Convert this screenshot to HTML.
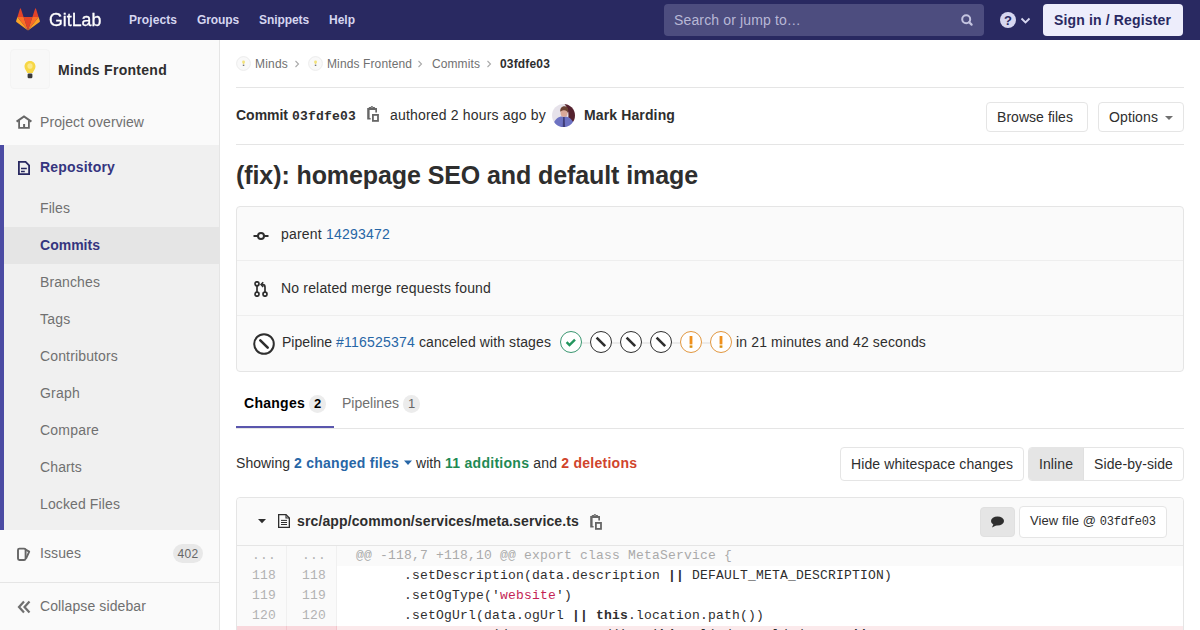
<!DOCTYPE html>
<html><head><meta charset="utf-8">
<style>
*{box-sizing:border-box;margin:0;padding:0}
html,body{width:1200px;height:630px;overflow:hidden;background:#fff;font-family:"Liberation Sans",sans-serif;font-size:14px;color:#2e2e2e}
.abs{position:absolute;white-space:nowrap}
.mono{font-family:"Liberation Mono",monospace}
.hr{position:absolute;height:1px;background:#e5e5e5}
.btn{position:absolute;border:1px solid #e5e5e5;border-radius:4px;background:#fff}
.conn{position:absolute;top:342px;width:8px;height:2px;background:#ebebeb}
.ln{position:absolute;height:20px;line-height:20px;font-family:"Liberation Mono",monospace;font-size:13px;letter-spacing:0.2px;color:#b3b3b3;text-align:right}
.code{position:absolute;left:337px;height:20px;line-height:20px;font-family:"Liberation Mono",monospace;font-size:13px;letter-spacing:0.2px;color:#2e2e2e;white-space:pre;padding-left:19px}
b{font-weight:bold}
</style></head><body>
<div class="abs" style="left:0;top:0;width:1200px;height:40px;background:#292961"></div>
<svg class="abs" style="left:16px;top:8px" width="24" height="23" viewBox="0 0 24 23">
<path d="M12 22.5 L16.4 8.9 H7.6 Z" fill="#e24329"/>
<path d="M12 22.5 L7.6 8.9 H1.4 Z" fill="#fc6d26"/>
<path d="M1.4 8.9 L0.1 13 a0.9 0.9 0 0 0 .3 1 L12 22.5 Z" fill="#fca326"/>
<path d="M1.4 8.9 H7.6 L4.9 0.7 a0.47 0.47 0 0 0 -.9 0 Z" fill="#e24329"/>
<path d="M12 22.5 L16.4 8.9 H22.6 Z" fill="#fc6d26"/>
<path d="M22.6 8.9 L23.9 13 a0.9 0.9 0 0 1 -.3 1 L12 22.5 Z" fill="#fca326"/>
<path d="M22.6 8.9 H16.4 L19.1 0.7 a0.47 0.47 0 0 1 .9 0 Z" fill="#e24329"/>
</svg>
<div class="abs" style="left:49px;top:0;line-height:40px;color:#fff;font-size:19px;letter-spacing:0px;transform:scaleX(0.935);transform-origin:0 0;-webkit-text-stroke:0.3px #fff">GitLab</div>
<div class="abs" style="left:129px;top:-1px;line-height:40px;color:#d6d6f0"><span style="font-weight:bold;font-size:12px;letter-spacing:0.081px;">Projects</span></div>
<div class="abs" style="left:197px;top:-1px;line-height:40px;color:#d6d6f0"><span style="font-weight:bold;font-size:12px;letter-spacing:-0.111px;">Groups</span></div>
<div class="abs" style="left:259px;top:-1px;line-height:40px;color:#d6d6f0"><span style="font-weight:bold;font-size:12px;letter-spacing:-0.084px;">Snippets</span></div>
<div class="abs" style="left:329px;top:-1px;line-height:40px;color:#d6d6f0"><span style="font-weight:bold;font-size:12px;letter-spacing:-0.001px;">Help</span></div>
<div class="abs" style="left:664px;top:4px;width:320px;height:32px;border-radius:4px;background:#4d4d7f"></div>
<div class="abs" style="left:674px;top:4px;line-height:32px;color:#b8b8d6"><span style="font-size:14px;letter-spacing:0.139px;">Search or jump to…</span></div>
<svg class="abs" style="left:960px;top:13px" width="14" height="14" viewBox="0 0 14 14"><circle cx="6.2" cy="6.2" r="4" fill="none" stroke="#c4c4e0" stroke-width="2"/><path d="M9.2 9.2 L11.6 11.6" stroke="#c4c4e0" stroke-width="2.2" stroke-linecap="round"/></svg>
<svg class="abs" style="left:1000px;top:12px" width="16" height="16" viewBox="0 0 16 16"><circle cx="8" cy="8" r="8" fill="#d6d6f0"/><text x="8" y="12.6" text-anchor="middle" font-family="Liberation Sans" font-weight="bold" font-size="13" fill="#292961">?</text></svg>
<svg class="abs" style="left:1020px;top:17px" width="11" height="8" viewBox="0 0 11 8"><path d="M1.5 1.5 L5.5 5.5 L9.5 1.5" fill="none" stroke="#d6d6f0" stroke-width="1.8"/></svg>
<div class="abs" style="left:1043px;top:4px;width:140px;height:32px;border-radius:4px;background:#ededfb"></div>
<div class="abs" style="left:1054px;top:4px;line-height:32px;color:#292961"><span style="font-weight:bold;font-size:14px;letter-spacing:0.147px;">Sign in / Register</span></div>
<div class="abs" style="left:0;top:40px;width:220px;height:590px;background:#fafafa;border-right:1px solid #e5e5e5"></div>
<div class="abs" style="left:10px;top:49px;width:40px;height:40px;border-radius:4px;background:#f8f8f8;border:1px solid #f4f4f4"></div>
<svg class="abs" style="left:22px;top:59px" width="16" height="22" viewBox="0 0 16 22"><defs><filter id="bl" x="-30%" y="-30%" width="160%" height="160%"><feGaussianBlur stdDeviation="0.6"/></filter></defs><g filter="url(#bl)"><path d="M8 2 C4.5 2 2.5 4.6 2.5 7.5 C2.5 10 4.3 11.5 5.3 14 L10.7 14 C11.7 11.5 13.5 10 13.5 7.5 C13.5 4.6 11.5 2 8 2Z" fill="#f7d745"/><ellipse cx="8" cy="7" rx="2.6" ry="2.8" fill="#fbe88a"/><rect x="5.6" y="14.6" width="4.8" height="4.6" rx="1.2" fill="#3a3a3a"/></g></svg>
<div class="abs" style="left:58px;top:60px;line-height:20px"><span style="font-weight:bold;font-size:14px;letter-spacing:0.287px;">Minds Frontend</span></div>
<svg class="abs" style="left:16px;top:115px" width="16" height="15" viewBox="0 0 16 15"><path d="M3.1 5.2 V12.85 H12.9 V5.2" fill="none" stroke="#666" stroke-width="1.8"/><path d="M0.6 6.6 L8 1.4 L15.4 6.6" fill="none" stroke="#666" stroke-width="2"/><rect x="7.1" y="9" width="2" height="4" fill="#666"/></svg>
<div class="abs" style="left:40px;top:112px;line-height:20px;height:20px;font-size:14px;color:#707070"><span style="font-size:14px;letter-spacing:0.081px;">Project overview</span></div>
<div class="abs" style="left:0;top:145px;width:219px;height:385px;background:#f0f0f0"></div>
<div class="abs" style="left:0;top:145px;width:4px;height:385px;background:#4b4ba3"></div>
<svg class="abs" style="left:18px;top:161px" width="12" height="14" viewBox="0 0 12 14"><path d="M0.9 0.9 H7.6 L11.1 4.4 V13.1 H0.9 Z" fill="none" stroke="#292961" stroke-width="1.8" stroke-linejoin="miter"/><path d="M3 7.4 H8.8 M3 10.4 H6.8" stroke="#292961" stroke-width="1.5"/></svg>
<div class="abs" style="left:40px;top:157px;line-height:20px;height:20px;font-size:14px;color:#35357f"><span style="font-weight:bold;font-size:14px;letter-spacing:0.188px;">Repository</span></div>
<div class="abs" style="left:4px;top:227px;width:215px;height:37px;background:#e5e5e5"></div>
<div class="abs" style="left:40px;top:198px;line-height:20px;height:20px;font-size:14px;color:#707070"><span style="font-size:14px;letter-spacing:0.088px;">Files</span></div>
<div class="abs" style="left:40px;top:235px;line-height:20px;height:20px;font-size:14px;color:#35357f"><span style="font-weight:bold;font-size:14px;letter-spacing:0.015px;">Commits</span></div>
<div class="abs" style="left:40px;top:272px;line-height:20px;height:20px;font-size:14px;color:#707070"><span style="font-size:14px;letter-spacing:0.107px;">Branches</span></div>
<div class="abs" style="left:40px;top:309px;line-height:20px;height:20px;font-size:14px;color:#707070"><span style="font-size:14px;letter-spacing:0.219px;">Tags</span></div>
<div class="abs" style="left:40px;top:346px;line-height:20px;height:20px;font-size:14px;color:#707070"><span style="font-size:14px;letter-spacing:0.145px;">Contributors</span></div>
<div class="abs" style="left:40px;top:383px;line-height:20px;height:20px;font-size:14px;color:#707070"><span style="font-size:14px;letter-spacing:0.218px;">Graph</span></div>
<div class="abs" style="left:40px;top:420px;line-height:20px;height:20px;font-size:14px;color:#707070"><span style="font-size:14px;letter-spacing:0.203px;">Compare</span></div>
<div class="abs" style="left:40px;top:457px;line-height:20px;height:20px;font-size:14px;color:#707070"><span style="font-size:14px;letter-spacing:0.128px;">Charts</span></div>
<div class="abs" style="left:40px;top:494px;line-height:20px;height:20px;font-size:14px;color:#707070"><span style="font-size:14px;letter-spacing:0.117px;">Locked Files</span></div>
<svg class="abs" style="left:16px;top:546px" width="16" height="16" viewBox="0 0 16 16"><rect x="2" y="2.6" width="7.6" height="11.4" rx="1.4" fill="none" stroke="#666" stroke-width="1.9"/><path d="M9.6 3.6 L13.2 5.6 L10 12.6" fill="none" stroke="#666" stroke-width="1.9" stroke-linejoin="round"/></svg>
<div class="abs" style="left:40px;top:543px;line-height:20px;height:20px;font-size:14px;color:#707070"><span style="font-size:14px;letter-spacing:0.090px;">Issues</span></div>
<div class="abs" style="left:173px;top:544px;width:30px;height:19px;border-radius:10px;background:#e8e8e8;color:#666;line-height:19px;text-align:center"><span style="font-size:12px;letter-spacing:0.326px;">402</span></div>
<div class="hr" style="left:0;top:582px;width:219px"></div>
<svg class="abs" style="left:17px;top:600px" width="14" height="14" viewBox="0 0 14 14"><path d="M7 1.5 L2 7 L7 12.5 M12.5 1.5 L7.5 7 L12.5 12.5" fill="none" stroke="#707070" stroke-width="2.2"/></svg>
<div class="abs" style="left:40px;top:596px;line-height:20px;height:20px;font-size:14px;color:#707070"><span style="font-size:14px;letter-spacing:0.107px;">Collapse sidebar</span></div>
<svg class="abs" style="left:236px;top:56px" width="15" height="15" viewBox="0 0 15 15"><circle cx="7.5" cy="7.5" r="6.9" fill="#f9f9f9" stroke="#ececec" stroke-width="1"/><path d="M6.1 6 a1.45 1.45 0 1 1 2.9 0 c0 0.9-0.8 1.2-0.8 2.1 h-1.3 c0-0.9-0.8-1.2-0.8-2.1z" fill="#f2e27c"/><rect x="6.8" y="8.6" width="1.5" height="1.4" fill="#777"/></svg>
<div class="abs" style="left:255px;top:54px;line-height:20px;height:20px;font-size:12px;color:#707070"><span style="font-size:12px;letter-spacing:0.198px;">Minds</span></div>
<svg class="abs" style="left:294px;top:60px" width="6" height="8" viewBox="0 0 6 8"><path d="M1.5 1 L4.5 4 L1.5 7" fill="none" stroke="#aaa" stroke-width="1.1"/></svg>
<svg class="abs" style="left:308px;top:56px" width="15" height="15" viewBox="0 0 15 15"><circle cx="7.5" cy="7.5" r="6.9" fill="#f9f9f9" stroke="#ececec" stroke-width="1"/><path d="M6.1 6 a1.45 1.45 0 1 1 2.9 0 c0 0.9-0.8 1.2-0.8 2.1 h-1.3 c0-0.9-0.8-1.2-0.8-2.1z" fill="#f2e27c"/><rect x="6.8" y="8.6" width="1.5" height="1.4" fill="#777"/></svg>
<div class="abs" style="left:327px;top:54px;line-height:20px;height:20px;font-size:12px;color:#707070"><span style="font-size:12px;letter-spacing:0.116px;">Minds Frontend</span></div>
<svg class="abs" style="left:417px;top:60px" width="6" height="8" viewBox="0 0 6 8"><path d="M1.5 1 L4.5 4 L1.5 7" fill="none" stroke="#aaa" stroke-width="1.1"/></svg>
<div class="abs" style="left:432px;top:54px;line-height:20px;height:20px;font-size:12px;color:#707070"><span style="font-size:12px;letter-spacing:0.095px;">Commits</span></div>
<svg class="abs" style="left:486px;top:60px" width="6" height="8" viewBox="0 0 6 8"><path d="M1.5 1 L4.5 4 L1.5 7" fill="none" stroke="#aaa" stroke-width="1.1"/></svg>
<div class="abs" style="left:500px;top:54px;line-height:20px;height:20px;font-size:12px;color:#2e2e2e"><span style="font-weight:bold;font-size:12px;letter-spacing:0.164px;">03fdfe03</span></div>
<div class="hr" style="left:236px;top:87px;width:948px"></div>
<div class="abs" style="left:236px;top:105px;line-height:20px;height:20px;font-size:14px;"><span style="font-weight:bold;font-size:14px;letter-spacing:-0.018px;">Commit</span></div>
<div class="abs" style="left:292px;top:107px;line-height:20px;height:20px;font-size:13px;font-family:Liberation Mono;font-weight:bold;letter-spacing:0.2px">03fdfe03</div>
<svg class="abs" style="left:366px;top:105px" width="14" height="18" viewBox="0 0 14 18"><path d="M2.7 4.6 V2.6 Q2.7 1.9 3.6 1.9 H4.6 Q5.2 0.9 5.9 0.9 Q6.6 0.9 7.2 1.9 H8.2 Q9.1 1.9 9.1 2.6 V4.6 Z" fill="#666"/><rect x="5.1" y="2.7" width="1.7" height="1.3" fill="#fff"/><path d="M1.2 3 H11 V7.4 H9.3 V4.9 H3.6 V13 H4.6 V14.6 H1.2 Z" fill="#666"/><rect x="6.9" y="9.9" width="5.1" height="6" fill="none" stroke="#666" stroke-width="1.8"/></svg>
<div class="abs" style="left:390px;top:105px;line-height:20px;height:20px;font-size:14px;"><span style="font-size:14px;letter-spacing:0.184px;">authored 2 hours ago by</span></div>
<svg class="abs" style="left:552px;top:104px" width="23" height="23" viewBox="0 0 24 24"><defs><clipPath id="av"><circle cx="12" cy="12" r="12"/></clipPath><filter id="avb" x="-10%" y="-10%" width="120%" height="120%"><feGaussianBlur stdDeviation="0.5"/></filter></defs><g clip-path="url(#av)"><g filter="url(#avb)"><rect width="24" height="24" fill="#e6e2ea"/><path d="M13 0 H24 V24 H14 C18 16 19 7 13 0 Z" fill="#55202e"/><path d="M1 22 C3 15 8 12.5 12 13.2 C16 12.5 21 15 23 21 V24 H1 Z" fill="#6d72c2"/><path d="M11.6 13.5 H13.2 L13.6 24 H11.2 Z" fill="#3f3d78"/><ellipse cx="12.6" cy="9" rx="3.7" ry="4.4" fill="#d9a898"/><path d="M8.6 8.2 C8.2 3.8 11 2.2 13.5 2.4 C16.5 2.6 17.8 5.5 16.4 9.5 C15.8 6.5 12.5 5.5 8.6 8.2 Z" fill="#6b4232"/></g></g></svg>
<div class="abs" style="left:584px;top:105px;line-height:20px;height:20px;font-size:14px;"><span style="font-weight:bold;font-size:14px;letter-spacing:0.128px;">Mark Harding</span></div>
<div class="btn" style="left:986px;top:102px;width:102px;height:30px"></div>
<div class="abs" style="left:997px;top:107px;line-height:20px;height:20px;font-size:14px;"><span style="font-size:14px;letter-spacing:0.044px;">Browse files</span></div>
<div class="btn" style="left:1098px;top:102px;width:86px;height:30px"></div>
<div class="abs" style="left:1109px;top:107px;line-height:20px;height:20px;font-size:14px;"><span style="font-size:14px;letter-spacing:0.107px;">Options</span></div>
<svg class="abs" style="left:1164px;top:115px" width="10" height="6" viewBox="0 0 10 6"><path d="M1 1 L5 5 L9 1Z" fill="#707070"/></svg>
<div class="hr" style="left:236px;top:144px;width:948px"></div>
<div class="abs" style="left:236px;top:159px;line-height:32px;color:#2e2e2e"><span style="font-weight:bold;font-size:25px;letter-spacing:-0.090px;">(fix): homepage SEO and default image</span></div>
<div class="abs" style="left:236px;top:206px;width:948px;height:166px;background:#fafafa;border:1px solid #e5e5e5;border-radius:4px"></div>
<div class="hr" style="left:237px;top:260px;width:946px;background:#eeeeee"></div>
<div class="hr" style="left:237px;top:315px;width:946px;background:#eeeeee"></div>
<svg class="abs" style="left:253px;top:228px" width="16" height="16" viewBox="0 0 16 16"><circle cx="8" cy="8" r="3" fill="none" stroke="#2e2e2e" stroke-width="2"/><path d="M0.5 8 H5 M11 8 H15.5" stroke="#2e2e2e" stroke-width="2"/></svg>
<div class="abs" style="left:281px;top:224px;line-height:20px;height:20px;font-size:14px;"><span style="font-size:14px;letter-spacing:0.202px;">parent </span><span style="font-size:14px;letter-spacing:0.214px;color:#2766a6">14293472</span></div>
<svg class="abs" style="left:253px;top:281px" width="16" height="16" viewBox="0 0 16 16"><circle cx="4" cy="13.2" r="2" fill="none" stroke="#2e2e2e" stroke-width="1.7"/><circle cx="12" cy="13.2" r="2" fill="none" stroke="#2e2e2e" stroke-width="1.7"/><circle cx="4" cy="2.8" r="2" fill="none" stroke="#2e2e2e" stroke-width="1.7"/><path d="M4 4.8 V11.2 M12 11.2 V6.2 C12 4.5 11.2 3.6 9.8 3.6 H9" fill="none" stroke="#2e2e2e" stroke-width="1.7"/><path d="M10.2 1.2 L8 3.6 L10.2 6" fill="none" stroke="#2e2e2e" stroke-width="1.5"/></svg>
<div class="abs" style="left:281px;top:278px;line-height:20px;height:20px;font-size:14px;"><span style="font-size:14px;letter-spacing:0.172px;">No related merge requests found</span></div>
<svg class="abs" style="left:253px;top:333px" width="22" height="22" viewBox="0 0 22 22"><circle cx="11" cy="11" r="9.8" fill="#fff" stroke="#2e2e2e" stroke-width="2"/><path d="M7.3 7.3 L14.7 14.7" stroke="#2e2e2e" stroke-width="2.6" stroke-linecap="round"/></svg>
<div class="abs" style="left:282px;top:332px;line-height:20px;height:20px;font-size:14px;"><span style="font-size:14px;letter-spacing:0.033px;">Pipeline </span><span style="font-size:14px;letter-spacing:0.214px;color:#2766a6">#116525374</span><span style="font-size:14px;letter-spacing:0.102px;"> canceled with stages</span></div>
<div class="conn" style="left:582px"></div>
<div class="conn" style="left:612px"></div>
<div class="conn" style="left:642px"></div>
<div class="conn" style="left:672px"></div>
<div class="conn" style="left:702px"></div>
<svg class="abs" style="left:560px;top:331px" width="22" height="22" viewBox="0 0 22 22"><circle cx="11" cy="11" r="10.5" fill="#fff" stroke="#3a9670" stroke-width="1"/><path d="M6.6 11.2 L9.5 14.1 L15 8.6" fill="none" stroke="#23965e" stroke-width="2.4" stroke-linecap="butt" stroke-linejoin="miter"/></svg>
<svg class="abs" style="left:590px;top:331px" width="22" height="22" viewBox="0 0 22 22"><circle cx="11" cy="11" r="10.5" fill="#fff" stroke="#2e2e2e" stroke-width="1"/><path d="M6.6 6.6 L15.2 15.2" stroke="#2e2e2e" stroke-width="2.6" stroke-linecap="butt"/></svg>
<svg class="abs" style="left:620px;top:331px" width="22" height="22" viewBox="0 0 22 22"><circle cx="11" cy="11" r="10.5" fill="#fff" stroke="#2e2e2e" stroke-width="1"/><path d="M6.6 6.6 L15.2 15.2" stroke="#2e2e2e" stroke-width="2.6" stroke-linecap="butt"/></svg>
<svg class="abs" style="left:650px;top:331px" width="22" height="22" viewBox="0 0 22 22"><circle cx="11" cy="11" r="10.5" fill="#fff" stroke="#2e2e2e" stroke-width="1"/><path d="M6.6 6.6 L15.2 15.2" stroke="#2e2e2e" stroke-width="2.6" stroke-linecap="butt"/></svg>
<svg class="abs" style="left:680px;top:331px" width="22" height="22" viewBox="0 0 22 22"><circle cx="11" cy="11" r="10.5" fill="#fff" stroke="#e0963e" stroke-width="1"/><rect x="9.6" y="5" width="2.8" height="8.4" fill="#f0901c"/><rect x="9.6" y="14.4" width="2.8" height="2.4" fill="#d9900f"/></svg>
<svg class="abs" style="left:710px;top:331px" width="22" height="22" viewBox="0 0 22 22"><circle cx="11" cy="11" r="10.5" fill="#fff" stroke="#e0963e" stroke-width="1"/><rect x="9.6" y="5" width="2.8" height="8.4" fill="#f0901c"/><rect x="9.6" y="14.4" width="2.8" height="2.4" fill="#d9900f"/></svg>
<div class="abs" style="left:736px;top:332px;line-height:20px;height:20px;font-size:14px;"><span style="font-size:14px;letter-spacing:0.142px;">in 21 minutes and 42 seconds</span></div>
<div class="hr" style="left:236px;top:428px;width:948px"></div>
<div class="abs" style="left:236px;top:426px;width:98px;height:2px;background:#5a56ad"></div>
<div class="abs" style="left:244px;top:393px;line-height:20px;height:20px;font-size:14px;color:#000"><span style="font-weight:bold;font-size:14px;letter-spacing:0.268px;">Changes</span></div>
<div class="abs" style="left:309px;top:395px;width:17px;height:18px;border-radius:9px;background:#ececec;line-height:18px;text-align:center;color:#000;font-size:13px;font-weight:bold">2</div>
<div class="abs" style="left:342px;top:393px;line-height:20px;height:20px;font-size:14px;color:#707070"><span style="font-size:14px;letter-spacing:0.021px;">Pipelines</span></div>
<div class="abs" style="left:403px;top:395px;width:17px;height:18px;border-radius:9px;background:#ececec;line-height:18px;text-align:center;color:#666;font-size:13px">1</div>
<div class="abs" style="left:236px;top:453px;line-height:20px;height:20px;font-size:14px;"><span style="font-size:14px;letter-spacing:0.051px;">Showing </span><span style="font-weight:bold;font-size:14px;letter-spacing:0.257px;color:#2766a6">2 changed files</span></div>
<svg class="abs" style="left:403px;top:460px" width="10" height="6" viewBox="0 0 10 6"><path d="M1 0.5 L5 5 L9 0.5Z" fill="#2766a6"/></svg>
<div class="abs" style="left:416px;top:453px;line-height:20px;height:20px;font-size:14px;"><span style="font-size:14px;letter-spacing:0.043px;">with </span><span style="font-weight:bold;font-size:14px;letter-spacing:0.276px;color:#1f8a54">11 additions</span><span style="font-size:14px;letter-spacing:0.172px;"> and </span><span style="font-weight:bold;font-size:14px;letter-spacing:0.261px;color:#d0442c">2 deletions</span></div>
<div class="btn" style="left:840px;top:447px;width:184px;height:34px"></div>
<div class="abs" style="left:851px;top:454px;line-height:20px;height:20px;font-size:14px;"><span style="font-size:14px;letter-spacing:0.107px;">Hide whitespace changes</span></div>
<div class="btn" style="left:1028px;top:447px;width:156px;height:34px;overflow:hidden"><div class="abs" style="left:0;top:0;width:55px;height:32px;background:#e5e5e5;border-right:1px solid #e0e0e0"></div></div>
<div class="abs" style="left:1039px;top:454px;line-height:20px;height:20px;font-size:14px;"><span style="font-size:14px;letter-spacing:0.089px;">Inline</span></div>
<div class="abs" style="left:1094px;top:454px;line-height:20px;height:20px;font-size:14px;"><span style="font-size:14px;letter-spacing:0.099px;">Side-by-side</span></div>
<div class="abs" style="left:236px;top:497px;width:948px;height:140px;border:1px solid #e5e5e5;border-radius:4px 4px 0 0;background:#fff"></div>
<div class="abs" style="left:237px;top:498px;width:946px;height:48px;background:#fafafa;border-bottom:1px solid #e5e5e5;border-radius:4px 4px 0 0"></div>
<svg class="abs" style="left:258px;top:519px" width="8" height="5" viewBox="0 0 8 5"><path d="M0 0 H8 L4 4.3Z" fill="#2e2e2e"/></svg>
<svg class="abs" style="left:278px;top:514px" width="12" height="14" viewBox="0 0 12 14"><path d="M0.65 0.65 H8 L11.35 4 V13.35 H0.65 Z" fill="none" stroke="#2e2e2e" stroke-width="1.3"/><path d="M8 0.65 V4 H11.35" fill="none" stroke="#2e2e2e" stroke-width="1.1"/><path d="M3 6.4 H9 M3 8.5 H9 M3 10.5 H9" fill="none" stroke="#2e2e2e" stroke-width="1"/></svg>
<div class="abs" style="left:297px;top:511px;line-height:20px;height:20px;font-size:14px;"><span style="font-weight:bold;font-size:14px;letter-spacing:0.127px;">src/app/common/services/meta.service.ts</span></div>
<svg class="abs" style="left:589px;top:513px" width="14" height="18" viewBox="0 0 14 18"><path d="M2.7 4.6 V2.6 Q2.7 1.9 3.6 1.9 H4.6 Q5.2 0.9 5.9 0.9 Q6.6 0.9 7.2 1.9 H8.2 Q9.1 1.9 9.1 2.6 V4.6 Z" fill="#666"/><rect x="5.1" y="2.7" width="1.7" height="1.3" fill="#fff"/><path d="M1.2 3 H11 V7.4 H9.3 V4.9 H3.6 V13 H4.6 V14.6 H1.2 Z" fill="#666"/><rect x="6.9" y="9.9" width="5.1" height="6" fill="none" stroke="#666" stroke-width="1.8"/></svg>
<div class="abs" style="left:980px;top:507px;width:35px;height:30px;border-radius:4px;background:#e5e5e5;border:1px solid #e0e0e0"></div>
<svg class="abs" style="left:990px;top:515px" width="15" height="14" viewBox="0 0 15 14"><ellipse cx="7.5" cy="6" rx="6.5" ry="4.6" fill="#2e2e2e"/><path d="M3.5 9 L2 12.5 L7 10Z" fill="#2e2e2e"/></svg>
<div class="btn" style="left:1019px;top:506px;width:148px;height:32px"></div>
<div class="abs" style="left:1030px;top:511px;line-height:20px;height:20px;font-size:13px"><span style="font-size:13px;letter-spacing:0.098px;">View file @ </span><span class="mono" style="font-size:12px;letter-spacing:-0.2px">03fdfe03</span></div>
<div class="abs" style="left:237px;top:546px;width:946px;height:20px;background:#fafafa"></div>
<div class="abs" style="left:237px;top:566px;width:99px;height:60px;background:#fafafa"></div>
<div class="abs" style="left:286px;top:546px;width:1px;height:80px;background:#f0f0f0"></div>
<div class="abs" style="left:336px;top:546px;width:1px;height:80px;background:#f0f0f0"></div>
<div class="abs" style="left:237px;top:626px;width:100px;height:10px;background:#f9d7dc"></div>
<div class="abs" style="left:337px;top:626px;width:846px;height:10px;background:#fbe9eb"></div>
<div class="abs" style="left:286px;top:626px;width:1px;height:10px;background:#f3c5cc"></div>
<div class="abs" style="left:336px;top:626px;width:1px;height:10px;background:#f3c5cc"></div>
<div class="ln" style="left:237px;top:546px;width:39px">...</div>
<div class="ln" style="left:287px;top:546px;width:39px">...</div>
<div class="code" style="top:546px"><span style="color:#aaa">@@ -118,7 +118,10 @@ export class MetaService {</span></div>
<div class="ln" style="left:237px;top:566px;width:39px">118</div>
<div class="ln" style="left:287px;top:566px;width:39px">118</div>
<div class="code" style="top:566px">      .setDescription(data.description <b>||</b> DEFAULT_META_DESCRIPTION)</div>
<div class="ln" style="left:237px;top:586px;width:39px">119</div>
<div class="ln" style="left:287px;top:586px;width:39px">119</div>
<div class="code" style="top:586px">      .setOgType('<span style="color:#c41f55">website</span>')</div>
<div class="ln" style="left:237px;top:606px;width:39px">120</div>
<div class="ln" style="left:287px;top:606px;width:39px">120</div>
<div class="code" style="top:606px">      .setOgUrl(data.ogUrl <b>||</b> <b>this</b>.location.path())</div>
<div class="ln" style="left:237px;top:626px;width:39px"></div>
<div class="ln" style="left:287px;top:626px;width:39px"></div>
<div class="code" style="top:625px">      .screen.new(docs.move.nowd() = <b>this</b>.ul(ad + saldad.onsem<b>||</b></div>
</body></html>
